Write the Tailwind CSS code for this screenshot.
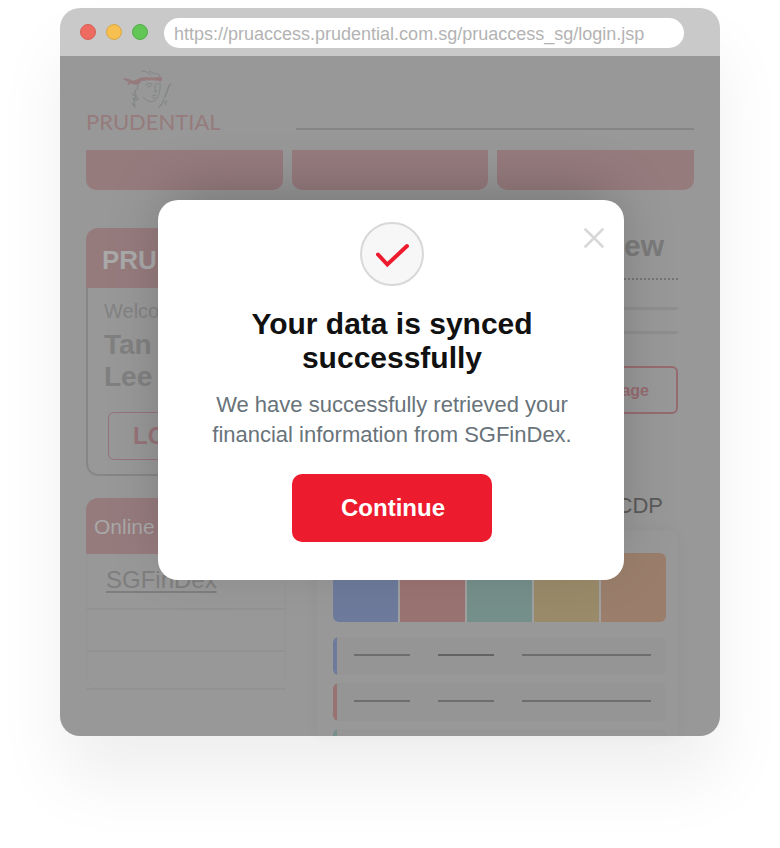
<!DOCTYPE html>
<html lang="en">
<head>
  <meta charset="UTF-8" />
  <meta name="viewport" content="width=device-width, initial-scale=1.0" />
  <title>PRUaccess - SGFinDex</title>
  <script src="https://cdn.jsdelivr.net/npm/@tailwindcss/browser@4"></script>
</head>
<body class="bg-white font-['Liberation_Sans',Arial,sans-serif] px-[60px] pt-2 pb-28">
  <!-- Browser window -->
  <div class="rounded-[20px] shadow-[0_44px_70px_rgba(0,0,0,0.065)]">
    <!-- Title bar -->
    <div class="flex items-center h-12 bg-[#c9c9c9] rounded-t-[20px] pl-5 pr-9">
      <div class="flex gap-[10px] mr-4">
        <span class="w-4 h-4 rounded-full bg-[#ed6b60] border border-[#d85e54]"></span>
        <span class="w-4 h-4 rounded-full bg-[#f5c04f] border border-[#d9a844]"></span>
        <span class="w-4 h-4 rounded-full bg-[#62c655] border border-[#53ab48]"></span>
      </div>
      <input type="text" aria-label="Address" value="https://pruaccess.prudential.com.sg/pruaccess_sg/login.jsp" class="flex-1 min-w-0 h-[30px] mt-[2px] pt-[2px] rounded-full bg-white px-[10px] text-[18px] text-[#b3b3b3] outline-none" />
    </div>

    <!-- Page -->
    <div class="relative bg-[#989898] rounded-b-[20px] px-[26px] pt-[14px]">
      <header class="flex items-end">
        <div class="w-[210px] h-[60px] flex flex-col">
          <svg class="w-[58px] h-[38px] ml-[34px] shrink-0" viewBox="0 0 58 38" fill="none" stroke="#838686" stroke-linecap="round" stroke-linejoin="round">
            <path d="M4 9 C7 8 9 10 13 11 C16 11 18 9 21 8 C27 7 34 9 40 7 L42 8 L41 11 C33 9 26 10 20 11 C21 13 18 15 14 14 C11 13 10 13 8 15 C8 12 10 12 12 12 C9 12 6 11 4 9 Z" fill="#967b7d" stroke="#967b7d" stroke-width="0.8" />
            <path d="M22 1 L27 2 L31 5 M29 1 L35 4 M36 3 L40 6" stroke-width="1" />
            <path d="M26 15 C28 13 30 13 32 14 M28 17 L31 16 M36 14 L38 14 M35 15 L35 20 L37 21 L34 22 M32 26 L36 25 M33 28 L35 28 M40 13 C41 21 38 29 34 31 C30 33 26 30 23 27" stroke-width="1" />
            <path d="M18 15 L17 20 M15 20 L16 26 L14 31 L15 37 M13 23 C12 26 18 26 18 29 C17 31 13 30 13 28 M12 33 L14 36" stroke-width="1.2" />
            <path d="M51 14 C48 15 49 18 47 21 L45 27" stroke-width="1.5" />
            <path d="M43 31 L42 34 L39 37 M47 31 L45 33 L46 35 M44 29 L43 32" stroke-width="1.2" />
          </svg>
          <span class="mt-auto text-[22px] leading-4 font-['Lato',sans-serif] text-[#967b7d]">PRUDENTIAL</span>
        </div>
        <div class="flex-1 h-[2px] bg-[#858585]"></div>
      </header>

      <nav class="grid grid-cols-3 gap-[9px] mt-5">
        <div class="h-10 rounded-b-[10px] bg-[#967b7d]"></div>
        <div class="h-10 rounded-b-[10px] bg-[#967b7d]"></div>
        <div class="h-10 rounded-b-[10px] bg-[#967b7d]"></div>
      </nav>

      <div class="flex mt-[38px] pr-4">
        <!-- Left column -->
        <div class="w-[200px] shrink-0">
          <section class="rounded-xl overflow-hidden">
            <h2 class="h-[60px] pt-1 px-4 flex items-center bg-[#967b7d] text-[26px] font-bold text-[#a9a9a9]">PRU<span class="text-[#7d7d7d]">ACCESS</span></h2>
            <div class="h-[188px] border-2 border-t-0 border-[#868686] rounded-b-xl px-4">
              <p class="pt-[11px] text-[20px] leading-6 text-[#838383]">Welcome</p>
              <p class="mt-[6px] text-[28px] leading-8 font-bold text-[#808080]">Tan<br>Lee</p>
              <button class="mt-[19px] ml-1 h-12 w-[156px] rounded-md border border-[#967378] text-left pl-6 text-[24px] font-bold text-[#967378]">LOGOUT</button>
            </div>
          </section>

          <section class="mt-[22px]">
            <h2 class="h-14 pt-[2px] px-2 flex items-center rounded-t-xl bg-[#967b7d] text-[21px] text-[#a9a9a9]">Online Services</h2>
            <div class="border-x border-[#949494] rounded-b-xl">
              <div class="h-[56px] pt-[11px] pl-[19px] border-b-2 border-[#929292]">
                <a href="#" class="text-[24px] leading-[30px] text-[#7e7e7e] underline underline-offset-3 decoration-2">SGFinDex</a>
              </div>
              <div class="h-[42px] border-b-2 border-[#929292]"></div>
              <div class="h-[36px]"></div>
            </div>
            <div class="h-[2px] bg-[#929292]"></div>
          </section>
        </div>

        <!-- Right column -->
        <div class="flex-1 ml-[31px]">
          <h1 class="text-right pr-[14px] text-[30px] leading-9 font-bold text-[#7a7a7a]">Overview</h1>
          <div class="mt-[14px] border-t-2 border-dotted border-[#747474]"></div>
          <div class="mt-[27px] h-[3px] bg-[#8e8e8e]"></div>
          <div class="mt-[21px] h-[3px] bg-[#8e8e8e]"></div>
          <button class="block mt-8 ml-auto h-12 w-[150px] pt-[2px] rounded-md border-2 border-[#966b70] text-right pr-[27px] text-[16px] font-bold text-[#966b70]">Manage</button>
          <p class="mt-[77px] pr-[15px] text-right text-[22px] leading-[30px] text-[#5a5a5a]">CDP</p>

          <div class="mt-[9px] pt-[23px] pl-4 pr-3 rounded-t-xl bg-[#989898] shadow-[0_0_14px_rgba(0,0,0,0.04)]">
            <div class="grid grid-cols-5 gap-[2px] rounded-md overflow-hidden h-[69px] bg-[#a0a0a0]">
              <div class="bg-[#6d7a9b]"></div>
              <div class="bg-[#997371]"></div>
              <div class="bg-[#758f8b]"></div>
              <div class="bg-[#998a69]"></div>
              <div class="bg-[#9a7e6b]"></div>
            </div>
            <div class="mt-[15px] h-[38px] rounded-md overflow-hidden bg-[#959595] flex items-center pr-[15px]">
              <span class="w-1 h-full mr-[17px] bg-[#6d7a9b]"></span>
              <span class="w-14 h-[2px] mb-[2px] mr-7 bg-[#6e6e6e]"></span>
              <span class="w-14 h-[2px] mb-[2px] mr-7 bg-[#636363]"></span>
              <span class="flex-1 h-[2px] mb-[2px] bg-[#6e6e6e]"></span>
            </div>
            <div class="mt-2 h-[38px] rounded-md overflow-hidden bg-[#959595] flex items-center pr-[15px]">
              <span class="w-1 h-full mr-[17px] bg-[#997371]"></span>
              <span class="w-14 h-[2px] mb-[2px] mr-7 bg-[#6e6e6e]"></span>
              <span class="w-14 h-[2px] mb-[2px] mr-7 bg-[#6e6e6e]"></span>
              <span class="flex-1 h-[2px] mb-[2px] bg-[#6e6e6e]"></span>
            </div>
            <div class="mt-2 h-[7px] rounded-t-md overflow-hidden bg-[#959595]">
              <span class="block w-1 h-full bg-[#758f8b]"></span>
            </div>
          </div>
        </div>
      </div>

      <!-- Dialog -->
      <div role="dialog" aria-labelledby="syncTitle" class="absolute top-36 left-[98px] right-[96px] flex flex-col items-center rounded-[20px] bg-white pt-[22px] pb-[38px] pl-10 pr-[38px] text-center shadow-[0_-16px_60px_-12px_rgba(0,0,0,0.26)]">
        <button aria-label="Close" class="absolute top-7 right-5 w-5 h-5">
          <svg viewBox="0 0 20 20" class="w-5 h-5" fill="none" stroke="#d8d8d8" stroke-width="2.6" stroke-linecap="round">
            <path d="M1.5 1.5 L18.5 18.5 M18.5 1.5 L1.5 18.5" />
          </svg>
        </button>
        <svg viewBox="0 0 64 64" class="w-16 h-16" fill="none">
          <circle cx="32" cy="32" r="31" fill="#f7f7f7" stroke="#d8d8d8" stroke-width="2" />
          <path d="M18 32.5 L27.3 42.5 L47 24" stroke="#ed1b2e" stroke-width="4" stroke-linecap="round" />
        </svg>
        <h2 id="syncTitle" class="mt-[21px] text-[30px] leading-[34px] font-bold text-[#111111]">Your data is synced<br>successfully</h2>
        <p class="mt-[15px] text-[22px] leading-[30px] text-[#68737a]">We have successfully retrieved your<br>financial information from SGFinDex.</p>
        <button class="mt-6 h-[68px] w-[200px] pl-[2px] rounded-[10px] bg-[#ed1b2e] text-[24px] font-bold text-white">Continue</button>
      </div>
    </div>
  </div>
</body>
</html>
